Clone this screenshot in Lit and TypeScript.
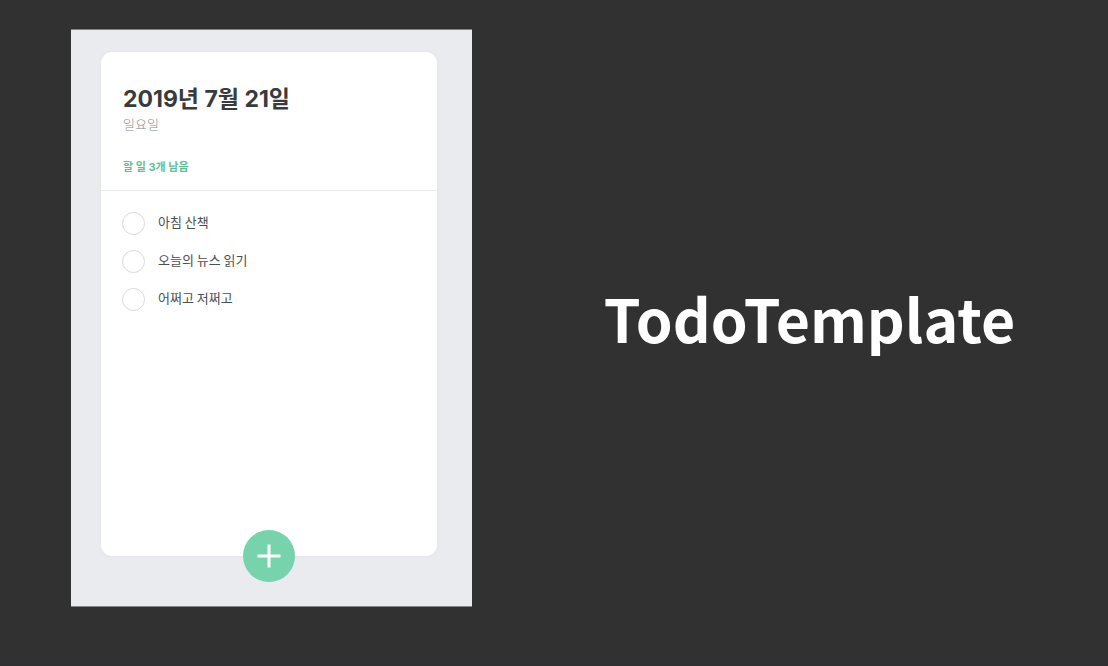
import { LitElement, html, css } from "lit";
import { customElement, state } from "lit/decorators.js";

interface Todo {
  id: number;
  text: string;
  done: boolean;
}

@customElement("todo-template")
class TodoTemplate extends LitElement {
  static styles = css`
    :host {
      display: flex;
      flex-direction: column;
      box-sizing: border-box;
      background: #e9ebef;
      border-top: 1px solid #828385;
      border-bottom: 1px solid #828385;
      padding: 22px 35px 50px 30px;
      color: #343a40;
      font-family: "Noto Sans CJK KR", sans-serif;
    }
    .card {
      position: relative;
      flex: 1;
      background: #fff;
      border-radius: 11px;
      box-shadow: 0 0 5px rgba(0, 0, 0, 0.04);
    }
    .head {
      padding: 33px 22px 15px;
      border-bottom: 1px solid #e9ecef;
    }
    h1 {
      margin: 0;
      color: #373b3e;
      font: 700 23px/28px Inter, "Noto Sans CJK KR", sans-serif;
    }
    .day {
      margin: 2px 0 0;
      font-size: 13px;
      line-height: 18px;
      font-weight: 300;
      color: #868a8e;
    }
    .left {
      margin: 26px 0 0;
      font: 700 11px/16px Inter, "Noto Sans CJK KR", sans-serif;
      color: #5cbf98;
    }
    ul {
      margin: 0;
      padding: 13px 21px;
      list-style: none;
    }
    label {
      display: flex;
      align-items: center;
      gap: 13px;
      height: 38px;
      font-size: 13px;
      line-height: 18px;
      color: #4b4f52;
    }
    .text {
      padding-bottom: 2px;
    }
    .check {
      appearance: none;
      box-sizing: border-box;
      width: 23px;
      height: 23px;
      margin: 0;
      border: 1px solid #d5dadd;
      border-radius: 50%;
    }
    .check:checked {
      border-color: #38d9a9;
      background: #38d9a9;
    }
    .add {
      position: absolute;
      left: 50%;
      bottom: 0;
      transform: translate(-50%, 50%);
      display: flex;
      align-items: center;
      justify-content: center;
      width: 52px;
      height: 52px;
      padding: 0;
      border: 0;
      border-radius: 50%;
      background: #76d3ab;
      color: #fff;
    }
  `;

  @state() private todos: Todo[] = [
    { id: 1, text: "아침 산책", done: false },
    { id: 2, text: "오늘의 뉴스 읽기", done: false },
    { id: 3, text: "어쩌고 저쩌고", done: false },
  ];

  private toggle(id: number) {
    this.todos = this.todos.map((t) => (t.id === id ? { ...t, done: !t.done } : t));
  }

  render() {
    const left = this.todos.filter((t) => !t.done).length;
    return html`
      <section class="card">
        <header class="head">
          <h1>2019년 7월 21일</h1>
          <p class="day">일요일</p>
          <p class="left">할 일 ${left}개 남음</p>
        </header>
        <ul>
          ${this.todos.map(
            (t) => html`<li>
              <label>
                <input class="check" type="checkbox" .checked=${t.done} @change=${() => this.toggle(t.id)} />
                <span class="text">${t.text}</span>
              </label>
            </li>`
          )}
        </ul>
        <button class="add" type="button" aria-label="추가">
          <svg width="24" height="24" viewBox="0 0 24 24" fill="none" stroke="currentColor" stroke-width="3">
            <path d="M12 0.5v23M0.5 12h23" />
          </svg>
        </button>
      </section>
    `;
  }
}

@customElement("app-root")
class AppRoot extends LitElement {
  static styles = css`
    :host {
      display: grid;
      grid-template-columns: 401fr 473fr;
      gap: 101px;
      box-sizing: border-box;
      min-height: 100vh;
      padding: 29px 62px 58px 71px;
      border-bottom: 1px solid #352d31;
      background: #313131;
    }
    .title {
      align-self: center;
      justify-self: center;
      margin: 0;
      color: #fff;
      font: 700 59px/80px "Noto Sans CJK KR", sans-serif;
    }
  `;

  render() {
    return html`
      <todo-template></todo-template>
      <h2 class="title">TodoTemplate</h2>
    `;
  }
}
